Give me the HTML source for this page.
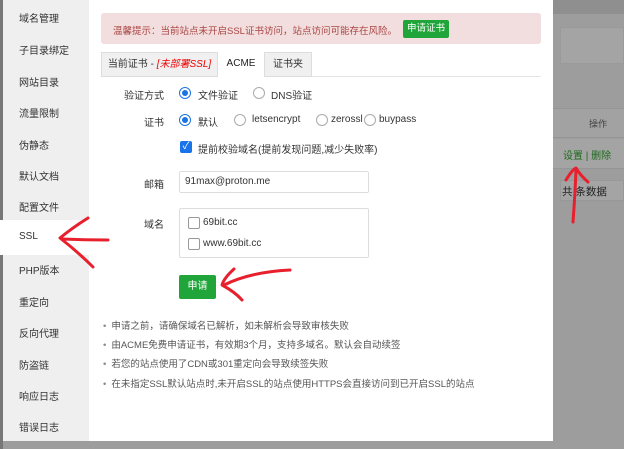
<!DOCTYPE html>
<html><head><meta charset="utf-8"><style>
*{margin:0;padding:0;box-sizing:border-box}
body{width:624px;height:449px;overflow:hidden;background:#9d9d9d;font-family:"Liberation Sans","Noto Sans CJK SC",sans-serif;font-size:10px;color:#333;position:relative}
.a{position:absolute}
.side{left:3px;top:0;width:86px;height:441px;background:#efefef}
.side div{position:absolute;left:16px;font-size:10px;color:#333}
.modal{left:89px;top:0;width:464px;height:441px;background:#fff}
.radio{position:absolute;width:12px;height:12px;border:1px solid #aaa;border-radius:50%;background:#fff}
.radio.on{border:1px solid #1a73e8}
.radio.on:after{content:"";position:absolute;left:2px;top:2px;width:6px;height:6px;border-radius:50%;background:#1a73e8}
.lbl{position:absolute;text-align:right;width:80px;left:84px}
.note{position:absolute;left:103px;font-size:9.5px;color:#555}
.note:before{content:"•";margin-right:5px;color:#888}
.cb{position:absolute;width:12px;height:12px;border:1px solid #999;border-radius:2px;background:#fff}
</style></head><body>
<div class="a" style="left:0;top:0;width:3px;height:449px;background:#777"></div>
<div class="a" style="left:553px;top:0;width:71px;height:14px;background:#8f8f8f"></div>
<div class="a" style="left:560px;top:27px;width:64px;height:37px;background:#a4a4a4;border:1px solid #9a9a9a"></div>
<div class="a" style="left:553px;top:108px;width:71px;height:30px;background:#a2a2a2;border-top:1px solid #959595;border-bottom:1px solid #959595"></div>
<div class="a" style="left:589px;top:117px;font-size:9px;color:#444">操作</div>
<div class="a" style="left:553px;top:139px;width:71px;height:30px;background:#a4a4a4;border-bottom:1px solid #959595"></div>
<div class="a" style="left:563px;top:147px;font-size:10px;color:#1d6b1d">设置 | 删除</div>
<div class="a" style="left:560px;top:180px;width:64px;height:21px;background:#a4a4a4;border:1px solid #989898"></div>
<div class="a" style="left:562px;top:184px;font-size:10.5px;color:#222">共 条数据</div>
<div class="a side">
<div style="top:10px">域名管理</div><div style="top:42px">子目录绑定</div><div style="top:74px">网站目录</div><div style="top:105px">流量限制</div><div style="top:137px">伪静态</div><div style="top:168px">默认文档</div><div style="top:199px">配置文件</div>
<div style="top:220px;left:-3px;width:89px;height:35px;background:#fff"></div>
<div style="top:231px">SSL</div><div style="top:262px">PHP版本</div><div style="top:294px">重定向</div><div style="top:325px">反向代理</div><div style="top:357px">防盗链</div><div style="top:388px">响应日志</div><div style="top:419px">错误日志</div>
</div>
<div class="a modal"></div>
<div class="a" style="left:101px;top:13px;width:440px;height:31px;background:#f2dede;border-radius:3px"></div>
<div class="a" style="left:113px;top:23px;color:#a94442;font-size:9.5px">温馨提示：当前站点未开启SSL证书访问，站点访问可能存在风险。</div>
<div class="a" style="left:403px;top:20px;width:46px;height:18px;background:#20a53a;border-radius:2px;color:#fff;font-size:9.5px;line-height:18px;text-align:center">申请证书</div>
<div class="a" style="left:101px;top:76px;width:440px;height:1px;background:#e5e5e5"></div>
<div class="a" style="left:101px;top:52px;width:117px;height:25px;background:#f0f0f0;border:1px solid #ddd;line-height:24px;text-align:center">当前证书 - <i style="color:#e00">[未部署SSL]</i></div>
<div class="a" style="left:218px;top:52px;width:46px;height:25px;background:#fff;line-height:24px;text-align:center;color:#222">ACME</div>
<div class="a" style="left:264px;top:52px;width:48px;height:25px;background:#f0f0f0;border:1px solid #ddd;line-height:24px;text-align:center">证书夹</div>
<div class="lbl" style="top:87px">验证方式</div>
<div class="radio on" style="left:179px;top:87px"></div><div class="a" style="left:198px;top:87px">文件验证</div>
<div class="radio" style="left:253px;top:87px"></div><div class="a" style="left:271px;top:87px">DNS验证</div>
<div class="lbl" style="top:114px">证书</div>
<div class="radio on" style="left:179px;top:114px"></div><div class="a" style="left:198px;top:114px">默认</div>
<div class="radio" style="left:234px;top:114px"></div><div class="a" style="left:252px;top:114px">letsencrypt</div>
<div class="radio" style="left:316px;top:114px"></div><div class="a" style="left:331px;top:114px">zerossl</div>
<div class="radio" style="left:364px;top:114px"></div><div class="a" style="left:379px;top:114px">buypass</div>
<div class="a" style="left:180px;top:141px;width:12px;height:12px;background:#1a73e8;border-radius:2px;color:#fff;font-size:10px;line-height:12px;text-align:center">✓</div>
<div class="a" style="left:198px;top:141px">提前校验域名(提前发现问题,减少失败率)</div>
<div class="lbl" style="top:176px">邮箱</div>
<div class="a" style="left:179px;top:171px;width:190px;height:22px;border:1px solid #ddd;border-radius:2px;padding-left:5px;line-height:20px">91max@proton.me</div>
<div class="lbl" style="top:216px">域名</div>
<div class="a" style="left:179px;top:208px;width:190px;height:50px;border:1px solid #ddd;border-radius:2px"></div>
<div class="cb" style="left:188px;top:217px"></div><div class="a" style="left:203px;top:217px">69bit.cc</div>
<div class="cb" style="left:188px;top:238px"></div><div class="a" style="left:203px;top:238px">www.69bit.cc</div>
<div class="a" style="left:179px;top:275px;width:37px;height:24px;background:#20a53a;border-radius:2px;color:#fff;line-height:24px;text-align:center">申请</div>
<div class="note" style="top:318px">申请之前，请确保域名已解析，如未解析会导致审核失败</div>
<div class="note" style="top:337px">由ACME免费申请证书，有效期3个月，支持多域名。默认会自动续签</div>
<div class="note" style="top:356px">若您的站点使用了CDN或301重定向会导致续签失败</div>
<div class="note" style="top:376px">在未指定SSL默认站点时,未开启SSL的站点使用HTTPS会直接访问到已开启SSL的站点</div>
<svg class="a" style="left:0;top:0" width="624" height="449" fill="none" stroke="#e8202e" stroke-width="3" stroke-linecap="round" stroke-linejoin="round">
<path d="M88 218 Q72 228 60 238 Q78 252 93 267"/><path d="M62 239 Q85 240 108 240"/>
<path d="M234 269 Q224 278 222 285 Q235 292 242 300"/><path d="M224 285 Q250 272 290 270"/>
<path d="M573 222 Q575 195 576 170"/><path d="M566 180 Q572 170 576 168 Q580 175 588 182"/>
</svg>
</body></html>
